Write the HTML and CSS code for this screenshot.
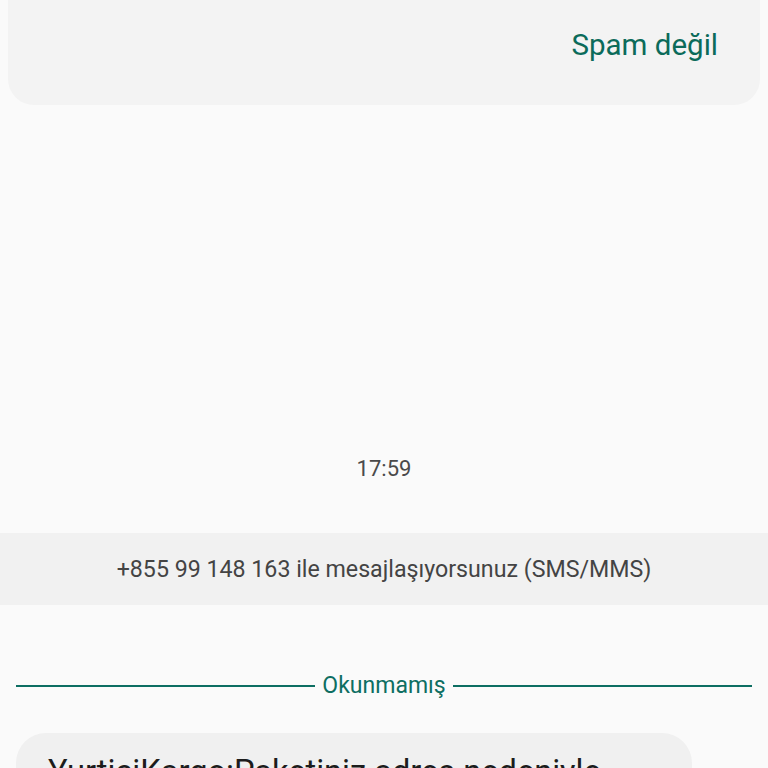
FILE: index.html
```html
<!DOCTYPE html>
<html lang="tr">
<head>
<meta charset="utf-8">
<link rel="stylesheet" href="styles.css">
</head>
<body>
<div class="page">
  <div class="card">
    <span class="spam-btn">Spam değil</span>
  </div>
  <div class="time">17:59</div>
  <div class="band">+855 99 148 163 ile mesajlaşıyorsunuz (SMS/MMS)</div>
  <div class="divider">
    <span class="line"></span>
    <span class="divider-label">Okunmamış</span>
    <span class="line"></span>
  </div>
  <div class="bubble">YurticiKargo:Paketiniz adres nedeniyle teslim edilemedi</div>
</div>
</body>
</html>
```
FILE: styles.css
```css
html, body {
  margin: 0;
  padding: 0;
  background: #fafafa;
}
.page {
  width: 768px;
  height: 768px;
  overflow: hidden;
  font-family: Roboto, "Noto Sans", sans-serif;
  display: flex;
  flex-direction: column;
}
.card {
  margin: 0 8px;
  height: 105px;
  flex: none;
  background: #f3f3f3;
  border-radius: 0 0 26px 26px;
  display: flex;
  justify-content: flex-end;
  align-items: flex-start;
  box-sizing: border-box;
  padding: 25px 42px 0 0;
}
.spam-btn {
  color: #0b6b5a;
  font-size: 29.5px;
  line-height: 40px;
  font-weight: 400;
}
.time {
  margin-top: 349px;
  text-align: center;
  font-size: 22px;
  line-height: 30px;
  color: #4a4a4a;
}
.band {
  margin-top: 49px;
  height: 72px;
  flex: none;
  background: #f1f1f1;
  display: flex;
  align-items: center;
  justify-content: center;
  font-size: 23.2px;
  color: #444;
}
.divider {
  margin: 67px 16px 0;
  display: flex;
  align-items: center;
  gap: 7px;
  height: 28px;
  flex: none;
}
.line {
  flex: 1;
  height: 2px;
  background: #0d6e62;
}
.divider-label {
  color: #0d6e62;
  font-size: 23px;
  line-height: 28px;
}
.bubble {
  margin: 33px 0 0 16px;
  width: 676px;
  flex: none;
  box-sizing: border-box;
  background: #f0f0f0;
  border-radius: 30px;
  padding: 18px 56px 14px 32px;
  font-size: 32.6px;
  line-height: 42px;
  color: #1c1c1c;
}
```
